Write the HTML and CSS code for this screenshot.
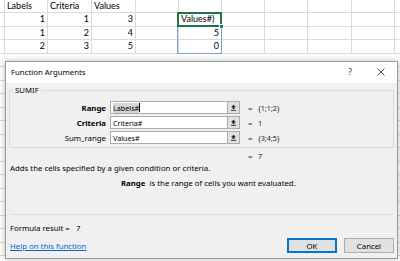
FILE: index.html
```html
<!DOCTYPE html>
<html lang="en">
<head>
  <meta charset="UTF-8">
  <title>Function Arguments - SUMIF</title>
  <link rel="stylesheet" href="styles.css">
</head>
<body>
  <!-- Worksheet -->
  <div class="sheet">
    <div class="row r-short">
      <div class="cell c-edge"></div>
      <div class="cell w43">Labels</div>
      <div class="cell w44">Criteria</div>
      <div class="cell w44">Values</div>
      <div class="cell w43"></div><div class="cell w43"></div><div class="cell w43"></div>
      <div class="cell w43"></div><div class="cell w44"></div><div class="cell w43"></div>
      <div class="cell c-rest"></div>
    </div>
    <div class="row r-tall">
      <div class="cell c-edge"></div>
      <div class="cell w43 num">1</div>
      <div class="cell w44 num">1</div>
      <div class="cell w44 num">3</div>
      <div class="cell w43"></div><div class="cell w43">Values#)</div><div class="cell w43"></div>
      <div class="cell w43"></div><div class="cell w44"></div><div class="cell w43"></div>
      <div class="cell c-rest"></div>
    </div>
    <div class="row">
      <div class="cell c-edge"></div>
      <div class="cell w43 num">1</div>
      <div class="cell w44 num">2</div>
      <div class="cell w44 num">4</div>
      <div class="cell w43"></div><div class="cell w43 num">5</div><div class="cell w43"></div>
      <div class="cell w43"></div><div class="cell w44"></div><div class="cell w43"></div>
      <div class="cell c-rest"></div>
    </div>
    <div class="row r-tall">
      <div class="cell c-edge"></div>
      <div class="cell w43 num">2</div>
      <div class="cell w44 num">3</div>
      <div class="cell w44 num">5</div>
      <div class="cell w43"></div><div class="cell w43 num">0</div><div class="cell w43"></div>
      <div class="cell w43"></div><div class="cell w44"></div><div class="cell w43"></div>
      <div class="cell c-rest"></div>
    </div>
    <div class="row"></div>
    <div class="row r-tall"></div>
    <div class="row"></div>
    <div class="row r-tall"></div>
    <div class="row"></div>
    <div class="row r-tall"></div>
    <div class="row"></div>
    <div class="row r-tall"></div>
    <div class="row"></div>
    <div class="row r-tall"></div>
    <div class="row"></div>
    <div class="row r-tall"></div>
    <div class="row"></div>
    <div class="row r-tall"></div>
    <div class="row"></div>

    <div class="active-cell"><span class="fill-handle"></span></div>
    <div class="ref-range"></div>
  </div>

  <!-- Function Arguments dialog -->
  <div class="dialog">
    <div class="titlebar">
      <span class="title">Function Arguments</span>
      <span class="title-btn help">?</span>
      <span class="title-btn close">
        <svg width="8" height="8" viewBox="0 0 8 8"><path d="M0.5 0.5L7.5 7.5M7.5 0.5L0.5 7.5" stroke="#333" stroke-width="0.9" fill="none"/></svg>
      </span>
    </div>

    <div class="dialog-body">
      <div class="group">
        <span class="group-label">SUMIF</span>

        <div class="arg">
          <span class="arg-name bold">Range</span>
          <span class="arg-input"><span class="sel">Labels#</span><span class="caret"></span></span>
          <span class="ref-btn"><svg width="7" height="7" viewBox="0 0 7 7"><path d="M3.5 0.8L6 3.3H4.4V5H2.6V3.3H1Z" fill="#222"/><path d="M1 6.3H6" stroke="#222" stroke-width="0.9"/></svg></span>
          <span class="arg-eq">=</span>
          <span class="arg-val">{1;1;2}</span>
        </div>
        <div class="arg">
          <span class="arg-name bold">Criteria</span>
          <span class="arg-input">Criteria#</span>
          <span class="ref-btn"><svg width="7" height="7" viewBox="0 0 7 7"><path d="M3.5 0.8L6 3.3H4.4V5H2.6V3.3H1Z" fill="#222"/><path d="M1 6.3H6" stroke="#222" stroke-width="0.9"/></svg></span>
          <span class="arg-eq">=</span>
          <span class="arg-val">1</span>
        </div>
        <div class="arg">
          <span class="arg-name">Sum_range</span>
          <span class="arg-input">Values#</span>
          <span class="ref-btn"><svg width="7" height="7" viewBox="0 0 7 7"><path d="M3.5 0.8L6 3.3H4.4V5H2.6V3.3H1Z" fill="#222"/><path d="M1 6.3H6" stroke="#222" stroke-width="0.9"/></svg></span>
          <span class="arg-eq">=</span>
          <span class="arg-val">{3;4;5}</span>
        </div>
      </div>

      <div class="result-line">
        <span class="arg-eq">=</span>
        <span class="arg-val">7</span>
      </div>

      <p class="desc">Adds the cells specified by a given condition or criteria.</p>
      <p class="arg-help"><b>Range</b>&nbsp;&nbsp;is the range of cells you want evaluated.</p>

      <div class="separator"></div>

      <p class="formula-result">Formula result =&nbsp;&nbsp;&nbsp;7</p>

      <div class="footer">
        <a class="help-link" href="#">Help on this function</a>
        <div class="buttons">
          <button class="btn btn-default">OK</button>
          <button class="btn">Cancel</button>
        </div>
      </div>
    </div>
  </div>
</body>
</html>
```

FILE: styles.css
```css
* {
  box-sizing: border-box;
}

body {
  margin: 0;
  width: 400px;
  height: 261px;
  overflow: hidden;
  background: #fff;
  font-family: Lato, "Liberation Sans", sans-serif;
}

/* Worksheet grid */
.sheet {
  position: relative;
}

.row {
  display: flex;
  height: 13px;
  border-bottom: 1px solid #dadada;
}

.row.r-short {
  height: 13px;
}

.row.r-tall {
  height: 14px;
}

.cell {
  height: 100%;
  border-right: 1px solid #dadada;
  font-size: 9px;
  line-height: 12px;
  padding: 0 2px;
  color: #000;
  white-space: nowrap;
  overflow: visible;
}

.cell.num {
  text-align: right;
}

.c-edge { width: 5px; padding: 0; }
.w43 { width: 43px; }
.w44 { width: 44px; }
.c-rest { flex: 1; border-right: none; }

.active-cell {
  position: absolute;
  left: 177px;
  top: 12px;
  width: 45px;
  height: 15px;
  border: 2px solid #217346;
}

.fill-handle {
  position: absolute;
  right: -4px;
  bottom: -4px;
  width: 5px;
  height: 5px;
  background: #217346;
  border: 1px solid #fff;
}

.ref-range {
  position: absolute;
  left: 177px;
  top: 27px;
  width: 45px;
  height: 27px;
  border: 1px solid #7f9fd6;
  border-top: none;
}

/* Dialog */
.dialog {
  position: absolute;
  left: 5px;
  top: 61px;
  width: 393px;
  height: 198px;
  background: #f0f0f0;
  border: 1px solid #9a9a9a;
  box-shadow: 0 0 6px rgba(0, 0, 0, 0.28);
  font-family: "Noto Sans", "Open Sans", sans-serif;
  font-size: 7.8px;
  color: #000;
}

.titlebar {
  display: flex;
  align-items: center;
  height: 21px;
  background: #fff;
  padding: 0 0 0 5px;
}

.title {
  flex: 1;
  font-size: 7.8px;
  margin-top: -2px;
}

.title-btn {
  display: flex;
  align-items: center;
  justify-content: center;
  height: 21px;
  color: #333;
  font-size: 8.5px;
  margin-top: -2px;
}

.title-btn.help {
  width: 30px;
}

.title-btn.close {
  width: 31px;
  margin-right: 1px;
}

.dialog-body {
  padding: 7px 3px 0 3px;
}

.group {
  position: relative;
  border: 1px solid #dcdcdc;
  padding: 10px 0 3px 0;
  display: flex;
  flex-direction: column;
  gap: 2px;
}

.group-label {
  position: absolute;
  left: 3px;
  top: -6px;
  padding: 0 2px;
  background: #f0f0f0;
  line-height: 10px;
}

.arg {
  display: flex;
  align-items: center;
  height: 13px;
}

.arg-name {
  width: 100px;
  text-align: right;
  padding-right: 4px;
}

.bold {
  font-weight: 700;
}

.arg-input {
  display: flex;
  align-items: center;
  width: 117px;
  height: 13px;
  background: #fff;
  border: 1px solid #ababab;
  border-right: none;
  padding-left: 2px;
  font-size: 7.2px;
  white-space: nowrap;
}

.sel {
  background: #d5d5d5;
}

.caret {
  display: inline-block;
  width: 1px;
  height: 9px;
  background: #000;
}

.ref-btn {
  display: flex;
  align-items: center;
  justify-content: center;
  width: 13px;
  height: 13px;
  background: #e1e1e1;
  border: 1px solid #ababab;
}

.arg-eq {
  margin-left: 8px;
  width: 10px;
  color: #333;
}

.arg-val {
  font-size: 7.2px;
  color: #222;
}

.result-line {
  display: flex;
  align-items: center;
  height: 10px;
  margin-top: 3px;
  padding-left: 231px;
}

p {
  margin: 0;
}

.desc {
  margin-top: 2px;
  padding-left: 1px;
  line-height: 10px;
}

.arg-help {
  margin-top: 5px;
  padding-left: 112px;
  line-height: 10px;
}

.separator {
  height: 1px;
  background: #dcdcdc;
  margin: 26px 1px 0 1px;
}

.formula-result {
  margin-top: 8px;
  padding-left: 1px;
  line-height: 10px;
}

.footer {
  display: flex;
  align-items: center;
  justify-content: space-between;
  margin-top: 5px;
  padding-left: 1px;
}

.help-link {
  color: #0066cc;
  text-decoration: underline;
  margin-top: 1px;
}

.buttons {
  display: flex;
  gap: 7px;
}

.btn {
  width: 50px;
  height: 15px;
  padding: 0;
  background: #e1e1e1;
  border: 1px solid #adadad;
  font-family: "Noto Sans", "Open Sans", sans-serif;
  font-size: 7.8px;
  color: #000;
}

.btn-default {
  border: 1px solid #0078d7;
  box-shadow: inset 0 0 0 1px #0078d7;
}
```
